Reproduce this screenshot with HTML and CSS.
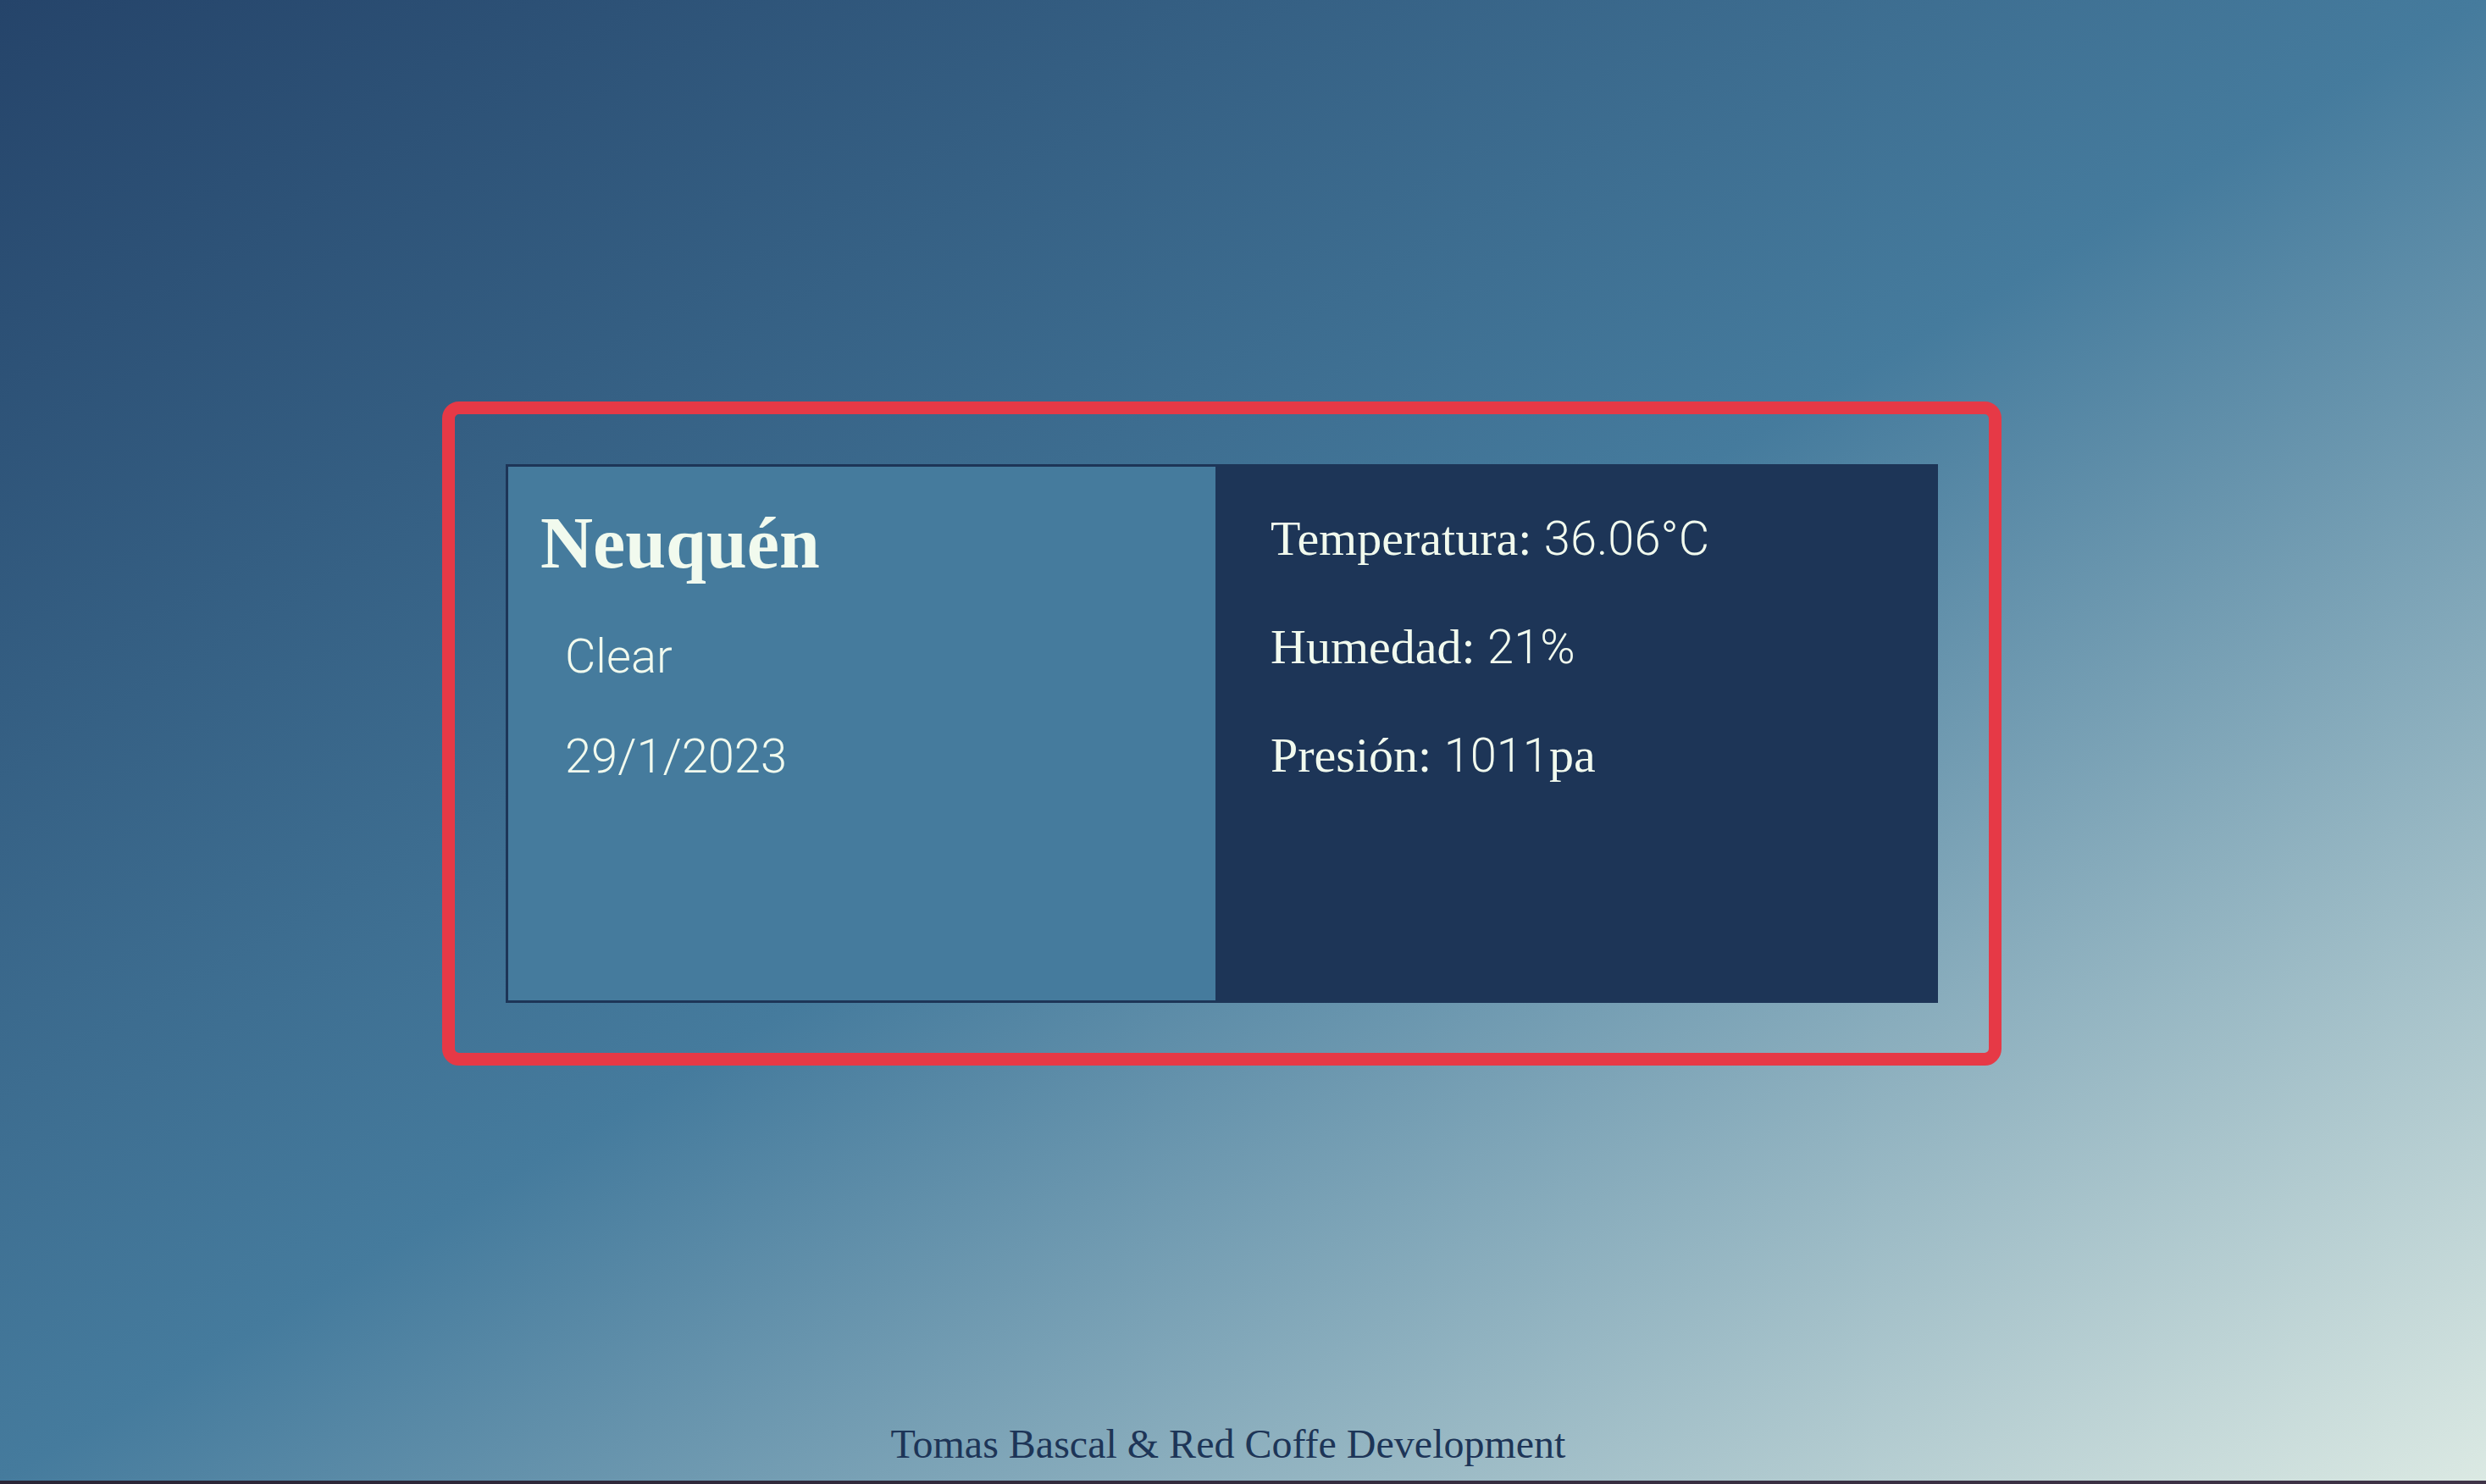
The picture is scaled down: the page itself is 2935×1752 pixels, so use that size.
FILE: index.html
```html
<!DOCTYPE html>
<html lang="es">
<head>
<meta charset="utf-8">
<title>Clima</title>
<link rel="stylesheet" href="styles.css">
</head>
<body>
<main class="page">
  <section class="card-frame">
    <div class="weather">
      <div class="weather__main">
        <h1 class="city">Neuquén</h1>
        <p class="info">Clear</p>
        <p class="info">29/1/2023</p>
      </div>
      <div class="weather__details">
        <p class="detail">Temperatura: <span class="value">36.06°C</span></p>
        <p class="detail">Humedad: <span class="value">21%</span></p>
        <p class="detail">Presión: <span class="value">1011</span>pa</p>
      </div>
    </div>
  </section>
</main>
<footer class="footer">Tomas Bascal &amp; Red Coffe Development</footer>
</body>
</html>
```
FILE: styles.css
```css
html {
  height: 100%;
  background: linear-gradient(90deg, #2a2536, #3f3347);
}

body {
  margin: 0;
  height: calc(100vh - 4px);
  display: flex;
  flex-direction: column;
  overflow: hidden;
  font-family: "Liberation Serif", "Times New Roman", serif;
  background: linear-gradient(to bottom right, #25446a 0%, #457b9d 50%, #dbe9e3 100%);
}

.page {
  display: flex;
  justify-content: center;
  padding: 474px 50px 0 0;
}

.card-frame {
  width: 1841px;
  flex-shrink: 0;
  box-sizing: border-box;
  border: 15px solid #e63946;
  border-radius: 20px;
  padding: 59px 60px;
}

.weather {
  display: flex;
  height: 636px;
}

.weather__main {
  width: 841px;
  flex-shrink: 0;
  box-sizing: border-box;
  border: 3px solid #1d3557;
  background: #457b9d;
  padding: 40px 0 0 38px;
}

.city {
  margin: 0;
  font-size: 86px;
  font-weight: 700;
  line-height: 100px;
  color: #f1faee;
}

.info {
  margin: 52px 0 0 29px;
  font-family: Roboto, "Liberation Sans", sans-serif;
  font-weight: 300;
  font-size: 56px;
  line-height: 66px;
  color: #f1faee;
}

.city + .info {
  margin-top: 51px;
}

.weather__details {
  flex: 1;
  display: flex;
  flex-direction: column;
  gap: 58px;
  background: #1d3557;
  padding: 53px 0 0 62px;
}

.detail {
  margin: 0;
  font-size: 58px;
  line-height: 70px;
  color: #f1faee;
}

.value {
  font-family: Roboto, "Liberation Sans", sans-serif;
  font-weight: 300;
  font-size: 56px;
}

.footer {
  margin-top: auto;
  padding: 0 35px 16px 0;
  text-align: center;
  font-size: 48px;
  line-height: 55px;
  color: #1d3557;
}
```
